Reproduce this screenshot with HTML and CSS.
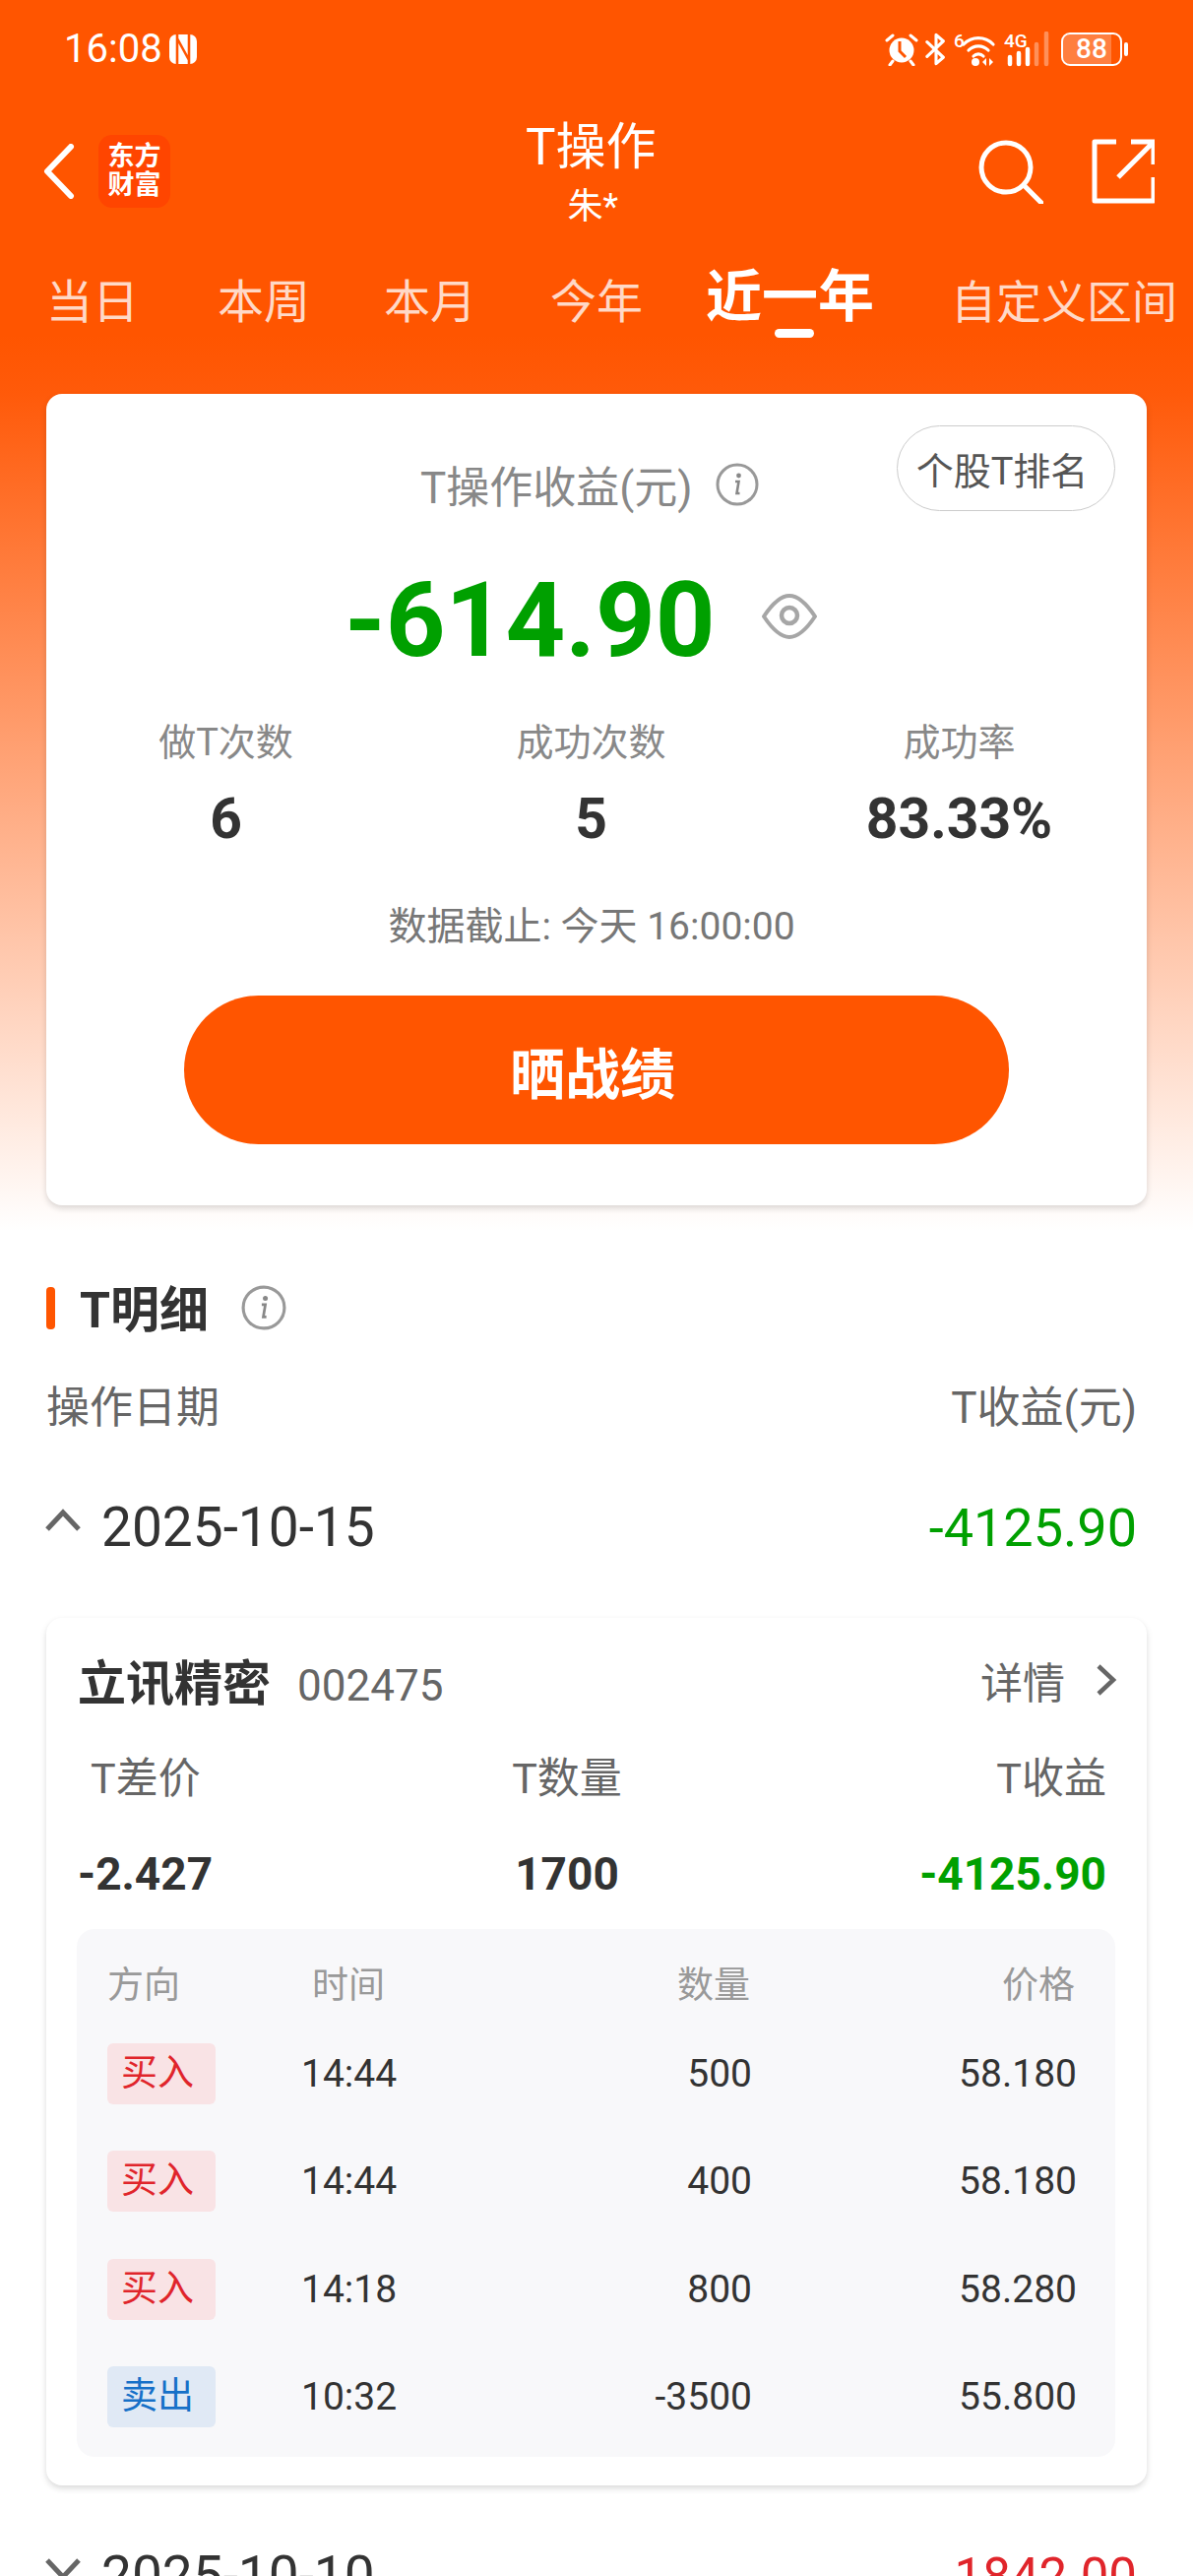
FILE: index.html
```html
<!DOCTYPE html>
<html lang="zh-CN">
<head>
<meta charset="UTF-8" />
<title>T操作</title>
<link rel="stylesheet" href="styles.css">
</head>
<body>
<div class="page">

  <!-- 顶部橙色区域 -->
  <div class="hero">
    <div class="status">
      <div class="status-left">
        <span class="clock">16:08</span>
        <svg class="nfc" width="30" height="32" viewBox="0 0 30 32"><rect x="1" y="1" width="28" height="30" rx="7" fill="#fff"/><path d="M9 1v30M21 1v30M9 5l12 22" stroke="#ff5500" stroke-width="2.6" fill="none"/></svg>
      </div>
      <div class="status-right">
        <svg width="34" height="34" viewBox="0 0 34 34"><circle cx="17" cy="18" r="12.5" fill="#fff"/><path d="M15 9v10l6 6" stroke="#ff5500" stroke-width="3" fill="none"/><path d="M2 8l6-5M32 8l-6-5M8 29l-3 4M26 29l3 4" stroke="#fff" stroke-width="3" stroke-linecap="round"/></svg>
        <svg width="22" height="34" viewBox="0 0 24 36"><path d="M2 10l18 17-8 7V2l8 7L2 26" stroke="#fff" stroke-width="3.4" fill="none" stroke-linejoin="round" stroke-linecap="round"/></svg>
        <div class="net">
          <span class="tiny">6</span>
          <svg width="44" height="36" viewBox="0 0 44 36"><path d="M10 13a21 21 0 0 1 30 0M15 19a14 14 0 0 1 20 0M20 25a7 7 0 0 1 10 0" stroke="#fff" stroke-width="3.2" fill="none" stroke-linecap="round"/><circle cx="22" cy="31" r="4" fill="#fff"/><path d="M33 27l-4 4 4 4zM36 27l4 4-4 4z" fill="#fff"/></svg>
        </div>
        <div class="net">
          <span class="tiny">4G</span>
          <svg width="48" height="36" viewBox="0 0 48 36"><path d="M6 26v7M15 22v11M24 18v15" stroke="#fff" stroke-width="4.5" stroke-linecap="round"/><path d="M33 13v20M43 2v31" stroke="#ffffff" stroke-opacity=".35" stroke-width="4.5" stroke-linecap="round"/></svg>
        </div>
        <div class="battery"><span class="battery-fill"></span><span class="battery-num">88</span></div>
        <span class="battery-nub"></span>
      </div>
    </div>

    <div class="nav">
      <div class="nav-left">
        <svg class="back" width="34" height="56" viewBox="0 0 34 56"><path d="M29 3L5 28l24 25" stroke="#fff" stroke-width="6" fill="none" stroke-linecap="round" stroke-linejoin="round"/></svg>
        <div class="logo"><span>东方</span><span>财富</span></div>
      </div>
      <div class="nav-title">
        <div class="title">T操作</div>
        <div class="subtitle">朱*</div>
      </div>
      <div class="nav-right">
        <svg width="66" height="66" viewBox="0 0 66 66"><circle cx="28" cy="29" r="25" stroke="#fff" stroke-width="5" fill="none"/><path d="M46 47l18 18" stroke="#fff" stroke-width="5" stroke-linecap="round"/></svg>
        <svg width="64" height="66" viewBox="0 0 64 66"><path d="M25 3H3v60h60V39" stroke="#fff" stroke-width="5" fill="none" stroke-linejoin="round"/><path d="M27 39L62 4M40 3h23v23" stroke="#fff" stroke-width="5" fill="none"/></svg>
      </div>
    </div>

    <div class="tabs">
      <span class="tab">当日</span>
      <span class="tab">本周</span>
      <span class="tab">本月</span>
      <span class="tab">今年</span>
      <span class="tab tab-active">近一年</span>
      <span class="tab">自定义区间</span>
    </div>

    <div class="card summary">
      <button class="rank-btn">个股T排名</button>
      <div class="summary-label">
        <span>T操作收益(元)</span>
        <svg class="info" width="44" height="44" viewBox="0 0 44 44"><circle cx="22" cy="22" r="20" stroke="#999" stroke-width="3" fill="none"/><circle cx="23.5" cy="13" r="2.4" fill="#888"/><path d="M20 19h3.500l-2 12h3" stroke="#888" stroke-width="2.600" fill="none"/></svg>
      </div>
      <div class="summary-value">
        <span class="big-num">-614.90</span>
        <svg class="eye" width="56" height="46" viewBox="0 0 56 46"><path d="M2 23C12 8 20 2 28 2s16 6 26 21C44 38 36 44 28 44S12 38 2 23z" stroke="#a6a6a6" stroke-width="4" fill="none" stroke-linejoin="round"/><circle cx="28" cy="22" r="8" stroke="#a6a6a6" stroke-width="4.500" fill="none"/></svg>
      </div>
      <div class="stats">
        <div class="stat"><div class="stat-label">做T次数</div><div class="stat-value">6</div></div>
        <div class="stat"><div class="stat-label">成功次数</div><div class="stat-value">5</div></div>
        <div class="stat"><div class="stat-label">成功率</div><div class="stat-value">83.33%</div></div>
      </div>
      <div class="deadline">数据截止: 今天 16:00:00</div>
      <button class="share-btn">晒战绩</button>
    </div>
  </div>

  <!-- T明细 -->
  <div class="detail">
    <div class="section-title">
      <span class="section-bar"></span>
      <span class="section-text">T明细</span>
      <svg width="46" height="46" viewBox="0 0 44 44"><circle cx="22" cy="22" r="20" stroke="#999" stroke-width="3" fill="none"/><circle cx="23.500" cy="13" r="2.400" fill="#888"/><path d="M20 19h3.500l-2 12h3" stroke="#888" stroke-width="2.600" fill="none"/></svg>
    </div>
    <div class="col-head"><span>操作日期</span><span>T收益(元)</span></div>

    <div class="date-row">
      <div class="date-left">
        <svg width="38" height="24" viewBox="0 0 38 24"><path d="M3 21L19 4l16 17" stroke="#666" stroke-width="5" fill="none"/></svg>
        <span class="date">2025-10-15</span>
      </div>
      <span class="amount green">-4125.90</span>
    </div>

    <div class="card stock">
      <div class="stock-head">
        <div class="stock-name"><b>立讯精密</b><span class="stock-code">002475</span></div>
        <div class="stock-more">详情
          <svg width="26" height="34" viewBox="0 0 26 34"><path d="M5 3l15 14L5 31" stroke="#666" stroke-width="4.500" fill="none"/></svg>
        </div>
      </div>
      <div class="metrics">
        <span class="m-label">T差价</span><span class="m-label m-center">T数量</span><span class="m-label m-right">T收益</span>
        <b class="m-val m-first">-2.427</b><b class="m-val m-center">1700</b><b class="m-val m-right green">-4125.90</b>
      </div>
      <div class="trades">
        <div class="trade trade-head"><span>方向</span><span class="t-time-head">时间</span><span class="t-right">数量</span><span class="t-right">价格</span></div>
        <div class="trade"><span class="tag buy">买入</span><span>14:44</span><span class="t-right">500</span><span class="t-right">58.180</span></div>
        <div class="trade"><span class="tag buy">买入</span><span>14:44</span><span class="t-right">400</span><span class="t-right">58.180</span></div>
        <div class="trade"><span class="tag buy">买入</span><span>14:18</span><span class="t-right">800</span><span class="t-right">58.280</span></div>
        <div class="trade"><span class="tag sell">卖出</span><span>10:32</span><span class="t-right">-3500</span><span class="t-right">55.800</span></div>
      </div>
    </div>

    <div class="date-row next">
      <div class="date-left">
        <svg width="38" height="24" viewBox="0 0 38 24"><path d="M3 3l16 17L35 3" stroke="#666" stroke-width="5" fill="none"/></svg>
        <span class="date">2025-10-10</span>
      </div>
      <span class="amount red amount-next">1842.00</span>
    </div>
  </div>

</div>
</body>
</html>
```

FILE: styles.css
```css
* {
  margin: 0; padding: 0; box-sizing: border-box;
}

html, body {
  width: 1212px;
  height: 2616px;
  overflow: hidden;
  background: #fff;
  font-family: Roboto, "Noto Sans CJK SC", sans-serif;
  color: #333;
}

.page {
  width: 1212px;
  height: 2616px;
  overflow: hidden;
}

.green { color: #00a000; }
.red { color: #e0252b; }

/* 顶部 */
.hero {
  height: 1250px;
  padding-top: 32px;
  background: linear-gradient(180deg, #ff5500 0, #ff5500 340px, #ff5a0a 400px, #ffffff 1250px);
}

.status {
  display: flex;
  justify-content: space-between;
  align-items: center;
  height: 36px;
  padding: 0 66px 0 65px;
  color: #fff;
}
.status-left, .status-right {
  display: flex;
  align-items: center;
}
.status-left { gap: 6px; }
.status-right { gap: 7px; }
.clock {
  font-size: 40px;
  line-height: 36px;
}
.net {
  position: relative;
}
.net svg { display: block; }
.tiny {
  position: absolute;
  left: 0;
  top: 0;
  font-size: 19px;
  font-weight: 500;
  line-height: 20px;
}
.battery {
  position: relative;
  width: 62px;
  height: 34px;
  margin-left: 3px;
  border: 2.500px solid #fff;
  border-radius: 9px;
  overflow: hidden;
  text-align: center;
}
.battery-fill {
  position: absolute;
  left: 0; top: 0; bottom: 0;
  width: 84%;
  background: rgba(255, 255, 255, 0.25);
}
.battery-num {
  position: relative;
  font-size: 28px;
  font-weight: 500;
  line-height: 29px;
  display: block;
}
.battery-nub {
  width: 4px;
  height: 14px;
  margin-left: -5px;
  background: #fff;
  border-radius: 2px;
}

.nav {
  display: grid;
  grid-template-columns: 491px auto 1fr;
  align-items: center;
  height: 120px;
  margin-top: 46px;
  padding: 0 39px 0 43px;
  color: #fff;
}
.nav-left {
  display: flex;
  align-items: center;
  gap: 23px;
}
.logo {
  display: flex;
  flex-direction: column;
  align-items: center;
  justify-content: center;
  width: 73px;
  height: 74px;
  background: #ff4500;
  border-radius: 14px;
  font-size: 27px;
  font-weight: 700;
  line-height: 29px;
}
.nav-title {
  padding-top: 4px;
  text-align: center;
}
.title {
  font-size: 51px;
  line-height: 60px;
}
.subtitle {
  padding-left: 4px;
  font-size: 36px;
  line-height: 44px;
  margin-top: 8px;
}
.nav-right {
  display: flex;
  justify-content: flex-end;
  align-items: center;
  gap: 49px;
}

.tabs {
  display: flex;
  align-items: center;
  gap: 75px;
  height: 72px;
  margin-top: 37px;
  padding-left: 47px;
}
.tab {
  position: relative;
  flex: none;
  font-size: 47px;
  line-height: 60px;
  color: rgba(255, 255, 255, 0.78);
}
.tab:first-child { margin-right: 5px; }
.tab:last-child {
  margin-left: -3px;
  font-size: 46px;
}
.tab-active {
  margin: 0 6px 0 -11px;
  font-size: 57px;
  font-weight: 700;
  color: #fff;
  top: -5px;
}
.tab-active::after {
  content: "";
  position: absolute;
  left: 70px;
  bottom: -11px;
  width: 40px;
  height: 9px;
  border-radius: 5px;
  background: #fff;
}

/* 卡片 */
.card {
  position: relative;
  margin: 0 47px;
  background: #fff;
  border-radius: 16px;
  box-shadow: 0 3px 6px rgba(0, 0, 0, 0.15);
}
.summary {
  height: 824px;
  margin-top: 57px;
  padding-top: 60px;
}
.rank-btn {
  position: absolute;
  top: 32px;
  right: 32px;
  width: 222px;
  height: 87px;
  padding-right: 8px;
  border: 1.500px solid #ccc;
  border-radius: 44px;
  background: #fff;
  font: inherit;
  font-size: 38px;
  color: #555;
}
.summary-label {
  display: flex;
  align-items: center;
  gap: 23px;
  padding-left: 380px;
  height: 64px;
  font-size: 44px;
  color: #888;
}
.summary-value {
  display: flex;
  align-items: center;
  gap: 47px;
  padding-left: 303px;
  height: 120px;
  margin-top: 46px;
}
.big-num {
  font-size: 106px;
  font-weight: 700;
  color: #00a000;
  line-height: 120px;
}
.eye { margin-bottom: 8px; }
.stats {
  display: grid;
  grid-template-columns: repeat(3, 1fr);
  margin: 36px 8px 0 -3px;
  text-align: center;
}
.stat:last-child { padding-left: 6px; }
.stat-label {
  font-size: 38px;
  line-height: 56px;
  color: #888;
}
.stat-value {
  font-size: 57px;
  font-weight: 700;
  line-height: 66px;
  margin-top: 17px;
}
.deadline {
  margin-top: 48px;
  padding-right: 10px;
  text-align: center;
  font-size: 39px;
  line-height: 56px;
  color: #777;
}
.share-btn {
  display: block;
  width: 838px;
  height: 151px;
  margin: 42px auto 0;
  padding-right: 8px;
  border: none;
  border-radius: 76px;
  background: #ff5500;
  color: #fff;
  font: inherit;
  font-size: 56px;
  font-weight: 700;
}

/* 明细 */
.section-title {
  display: flex;
  align-items: center;
  height: 46px;
  margin: 55px 47px 0;
}
.section-bar {
  width: 9px;
  height: 43px;
  margin-right: 25px;
  border-radius: 4px;
  background: #ff5500;
}
.section-text {
  margin: 0 33px 4px 0;
  font-size: 50px;
  font-weight: 700;
}
.col-head {
  display: flex;
  justify-content: space-between;
  margin: 49px 57px 0 47px;
  font-size: 44px;
  line-height: 60px;
  color: #666;
}
.date-row {
  display: flex;
  justify-content: space-between;
  align-items: center;
  height: 70px;
  margin: 56px 57px 0 45px;
  font-size: 55px;
}
.date-left {
  display: flex;
  align-items: center;
  gap: 20px;
}
.date-left svg { margin-bottom: 14px; }
.amount { font-size: 54px; }
.amount-next { font-size: 51px; }
.stock {
  height: 881px;
  margin-top: 57px;
  padding: 0 32px;
}
.stock-head {
  display: flex;
  justify-content: space-between;
  align-items: center;
  height: 133px;
  padding-bottom: 8px;
}
.stock-name b {
  font-size: 49px;
  font-weight: 700;
  margin-right: 27px;
}
.stock-code {
  font-size: 44px;
  color: #666;
}
.stock-more {
  display: flex;
  align-items: center;
  gap: 29px;
  margin-right: -4px;
  font-size: 43px;
  color: #666;
}
.metrics {
  display: grid;
  grid-template-columns: 421px 152px 1fr;
  grid-row-gap: 37px;
  align-items: center;
  padding: 0 9px 0 0;
}
.m-label {
  padding-left: 13px;
  font-size: 43px;
  line-height: 60px;
  color: #666;
}
.m-label.m-right, .m-label.m-center { padding-left: 0; }
.m-center { text-align: center; }
.m-right { text-align: right; }
.m-val {
  font-size: 46px;
  font-weight: 700;
  line-height: 60px;
}
.trades {
  height: 536px;
  margin: 26px 0 0 -1px;
  padding: 24px 39px 0 31px;
  background: #f8f8fa;
  border-radius: 18px;
}
.trade {
  display: grid;
  grid-template-columns: 197px 120px 1fr 330px;
  align-items: center;
  height: 109.500px;
  font-size: 39px;
  color: #333;
}
.trade-head {
  height: 68px;
  padding-top: 3px;
  align-items: start;
  font-size: 37px;
  color: #999;
}
.t-right { text-align: right; }
.t-time-head { padding-left: 11px; }
.trade-head .t-right { padding-right: 2px; }
.tag {
  width: 110px;
  height: 62px;
  border-radius: 6px;
  font-size: 37px;
  line-height: 62px;
  text-align: center;
  padding-right: 8px;
}
.buy { background: #f9e3e5; color: #e0252b; }
.sell { background: #e0e9f5; color: #1670c8; }
.next { margin-top: 57px; }
```
